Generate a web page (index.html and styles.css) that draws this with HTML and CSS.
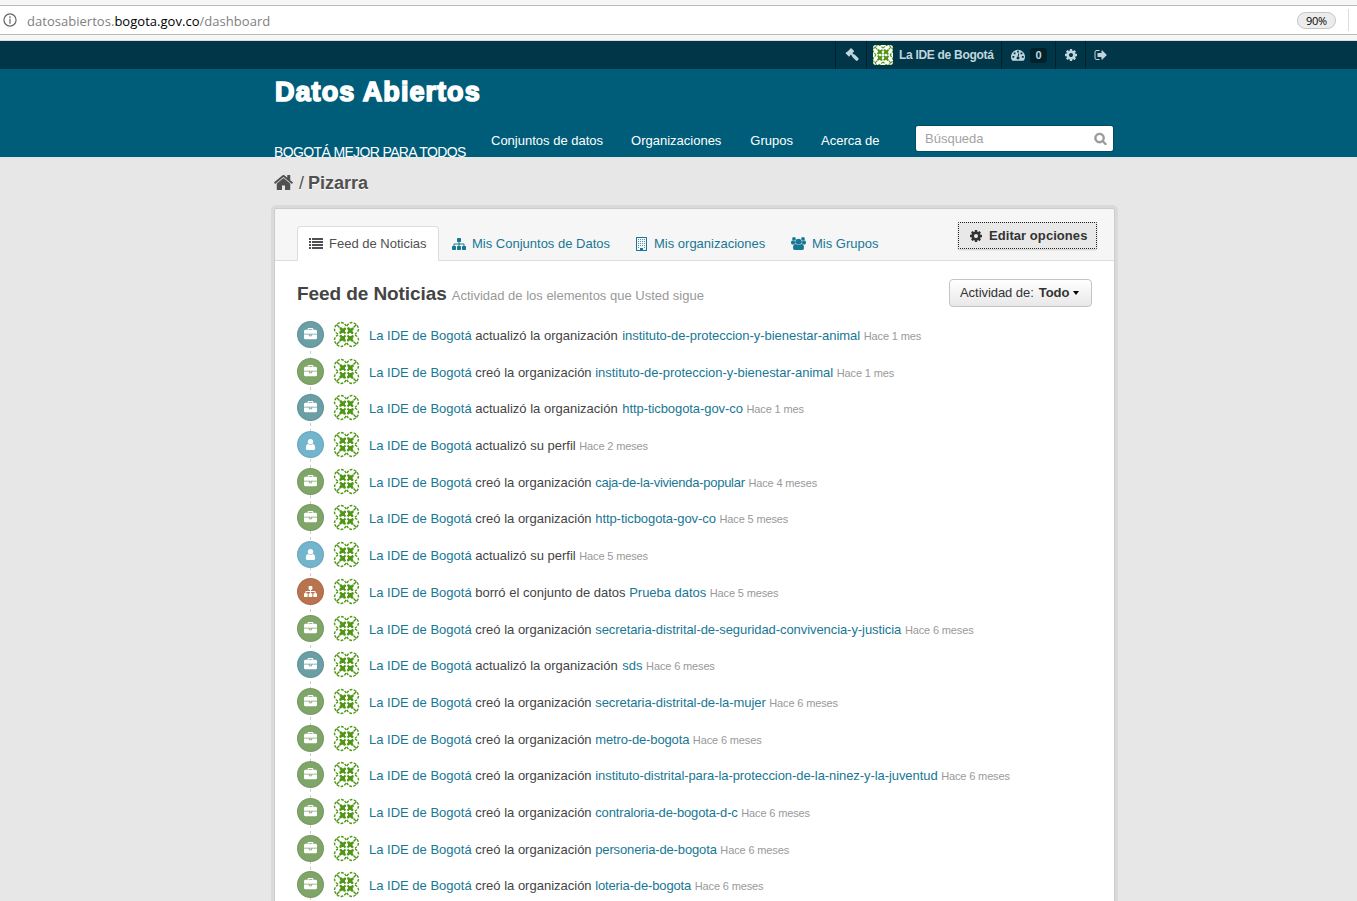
FILE: index.html
```html
<!DOCTYPE html>
<html lang="es">
<head>
<meta charset="utf-8">
<title>Pizarra - Datos Abiertos</title>
<link rel="stylesheet" href="styles.css">
</head>
<body>
<svg class="defs" width="0" height="0">
<symbol id="home" viewBox="0 0 1792 1792"><path d="M1472 992v480q0 26-19 45t-45 19h-384v-384h-256v384h-384q-26 0-45-19t-19-45v-480q0-1 .5-3t.5-3l575-474 575 474q1 2 1 6zm223-69l-62 74q-8 9-21 11h-3q-13 0-21-7l-692-577-692 577q-12 8-24 7-13-2-21-11l-62-74q-8-10-7-23.5t11-21.5l719-599q32-26 76-26t76 26l244 204v-195q0-14 9-23t23-9h192q14 0 23 9t9 23v408l219 182q10 8 11 21.5t-7 23.5z"/></symbol>
<symbol id="search" viewBox="0 0 1792 1792"><path d="M1216 832q0-185-131.5-316.5t-316.5-131.5-316.5 131.5-131.5 316.5 131.5 316.5 316.5 131.5 316.5-131.5 131.5-316.5zm512 832q0 52-38 90t-90 38q-54 0-90-38l-343-342q-179 124-399 124-143 0-273.5-55.5t-225-150-150-225-55.5-273.5 55.5-273.5 150-225 225-150 273.5-55.5 273.5 55.5 225 150 150 225 55.5 273.5q0 220-124 399l343 343q37 37 37 90z"/></symbol>
<symbol id="cog" viewBox="0 0 1792 1792"><path d="M1152 896q0-106-75-181t-181-75-181 75-75 181 75 181 181 75 181-75 75-181zm512-109v222q0 12-8 23t-20 13l-185 28q-19 54-39 91 35 50 107 138 10 12 10 25t-9 23q-27 37-99 108t-94 71q-12 0-26-9l-138-108q-44 23-91 38-16 136-29 186-7 28-36 28h-222q-14 0-24.5-8.5t-11.5-21.5l-28-184q-49-16-90-37l-141 107q-10 9-25 9-14 0-25-11-126-114-165-168-7-10-7-23 0-12 8-23 15-21 51-66.5t54-70.5q-27-50-41-99l-183-27q-13-2-21-12.5t-8-23.5v-222q0-12 8-23t19-13l186-28q14-46 39-92-40-57-107-138-10-12-10-24 0-10 9-23 26-36 98.5-107.5t94.5-71.5q13 0 26 10l138 107q44-23 91-38 16-136 29-186 7-28 36-28h222q14 0 24.5 8.5t11.5 21.5l28 184q49 16 90 37l142-107q9-9 24-9 13 0 25 10 129 119 165 170 7 8 7 22 0 12-8 23-15 21-51 66.5t-54 70.5q26 50 41 98l183 28q13 2 21 12.5t8 23.5z"/></symbol>
<symbol id="org" viewBox="0 0 1792 1792"><path d="M640 256h512v-128h-512v128zm1152 640v480q0 66-47 113t-113 47h-1472q-66 0-113-47t-47-113v-480h672v160q0 26 19 45t45 19h320q26 0 45-19t19-45v-160h672zm-768 0v128h-256v-128h256zm768-480v384h-1792v-384q0-66 47-113t113-47h352v-160q0-40 28-68t68-28h576q40 0 68 28t28 68v160h352q66 0 113 47t47 113z"/></symbol>
<symbol id="user" viewBox="0 0 1792 1792"><path d="M1536 1399q0 109-62.5 187t-150.5 78h-854q-88 0-150.5-78t-62.5-187q0-85 8.5-160.5t31.5-152 58.5-131 94-89 134.5-34.5q131 128 313 128t313-128q76 0 134.5 34.5t94 89 58.5 131 31.5 152 8.5 160.5zm-256-887q0 159-112.5 271.5t-271.5 112.5-271.5-112.5-112.5-271.5 112.5-271.5 271.5-112.5 271.5 112.5 112.5 271.5z"/></symbol>
<symbol id="sitemap" viewBox="0 0 1792 1792"><path d="M1792 1248v320q0 40-28 68t-68 28h-320q-40 0-68-28t-28-68v-320q0-40 28-68t68-28h96v-192h-512v192h96q40 0 68 28t28 68v320q0 40-28 68t-68 28h-320q-40 0-68-28t-28-68v-320q0-40 28-68t68-28h96v-192h-512v192h96q40 0 68 28t28 68v320q0 40-28 68t-68 28h-320q-40 0-68-28t-28-68v-320q0-40 28-68t68-28h96v-192q0-52 38-90t90-38h512v-192h-96q-40 0-68-28t-28-68v-320q0-40 28-68t68-28h320q40 0 68 28t28 68v320q0 40-28 68t-68 28h-96v192h512q52 0 90 38t38 90v192h96q40 0 68 28t28 68z"/></symbol>
<symbol id="signout" viewBox="0 0 1792 1792"><path d="M704 1440q0 4 1 20t.5 26.5-3 23.5-10 19.5-20.5 6.5h-320q-119 0-203.5-84.5t-84.5-203.5v-704q0-119 84.5-203.5t203.5-84.5h320q13 0 22.5 9.5t9.500 22.500q0 4 1 20t.5 26.5-3 23.5-10 19.5-20.5 6.5h-320q-66 0-113 47t-47 113v704q0 66 47 113t113 47h312l11.5 1 11.5 3 8 5.5 7 9 2 13.5zm928-544q0 26-19 45l-544 544q-19 19-45 19t-45-19-19-45v-288h-448q-26 0-45-19t-19-45v-384q0-26 19-45t45-19h448v-288q0-26 19-45t45-19 45 19l544 544q19 19 19 45z"/></symbol>
<symbol id="gavel" viewBox="0 0 14 14"><path d="M5.700.4Q6.200.2 6.600.6L8.800 2.800Q9.200 3.300 8.800 3.800L8.300 4.400 7.900 4.400 7.300 5 8.700 6.400Q9.300 6.200 9.900 6.700L13.400 10.200Q14 11 13.300 11.800L12.500 12.600Q11.700 13.200 10.900 12.600L7.400 9.100Q6.900 8.500 7.100 7.900L5.700 6.600 5.100 7.200 5.100 7.700 4.400 8.400Q3.900 8.700 3.500 8.300L.8 5.600Q.4 5.200.8 4.700L1.500 4.100 2 4.100 4.900 1.200 4.900.8z"/></symbol>
<symbol id="gauge" viewBox="0 0 14 12"><path d="M1 11.3A7 6.9 0 1 1 13 11.3Q12.7 11.7 12.2 11.7H1.8Q1.3 11.7 1 11.3z"/><path class="cut" d="M1.4 7.1h1.9v1.7H1.4zM2.7 3.4h1.8v1.8H2.7zM6.1 1.8h1.8v1.8H6.1zM9.6 3.4h1.8v1.8H9.6zM10.8 7.1h1.9v1.7h-1.9zM7.3 4.5h1L7.6 7.7Q9 8.4 8.4 9.8 7 11.2 5.6 9.8 5.2 8.3 6.6 7.7z"/></symbol>
<symbol id="list" viewBox="0 0 14 11"><path d="M0 0h2v2H0zM3 0h11v2H3zM0 3h2v2H0zM3 3h11v2H3zM0 6h2v2H0zM3 6h11v2H3zM0 9h2v2H0zM3 9h11v2H3z"/></symbol>
<symbol id="building" viewBox="0 0 11 14"><path fill-rule="evenodd" d="M.4 0h10.2q.4 0 .4.4v13.2q0 .4-.4.4H.4Q0 14 0 13.600V.4Q0 0 .4 0zM1 1v12h3v-2h3v2h3V1z"/><path opacity=".75" d="M2 2h1v1H2zM4 2h1v1H4zM6 2h1v1H6zM8 2h1v1H8zM2 4h1v1H2zM4 4h1v1H4zM6 4h1v1H6zM8 4h1v1H8zM2 6h1v1H2zM4 6h1v1H4zM6 6h1v1H6zM8 6h1v1H8zM2 8h1v1H2zM4 8h1v1H4zM6 8h1v1H6zM8 8h1v1H8zM2 10h1v1H2zM8 10h1v1H8z"/></symbol>
<symbol id="users" viewBox="0 0 15 13"><circle cx="3" cy="1.900" r="1.900"/><circle cx="12" cy="1.900" r="1.900"/><path d="M0 5.800Q0 3.500 1.300 3.500 3 4.600 4.700 3.900V6.500Q3.500 6.600 2.700 7.500H1.300Q0 7.300 0 5.800zM15 5.800Q15 3.500 13.700 3.500 12 4.600 10.300 3.900V6.500Q11.500 6.600 12.300 7.500h1.400Q15 7.300 15 5.800z"/><circle cx="7.500" cy="4.600" r="2.900"/><path d="M2 11Q2 7 4.500 7q3 1.300 6 0Q13 7 13 11q0 2-1.800 2H3.800Q2 13 2 11z"/></symbol>
<symbol id="avatar" viewBox="0 0 27 27">
<g id="quarter"><path d="M7 7l5.500 5.500M12.500 7L7 12.500" stroke="#4f9614" stroke-width="2"/><circle cx="9.700" cy="9.700" r="2.400" fill="#4f9614"/><path d="M6.500 6.500h2.500v2.500zM12.800 6.500v2.500h-2.500zM6.500 12.800v-2.500h2.500z" fill="#4f9614"/><path d="M5 13.200Q-1.200 9 3.600 3.600Q9-1.200 13.200 5" fill="none" stroke="#4f9614" stroke-width="1.400" stroke-dasharray="2.800 1.300"/><path d="M3.500 3.500l3 3" stroke="#4f9614" stroke-width="1.400"/></g>
<use href="#quarter" transform="rotate(90 13.500 13.500)"/><use href="#quarter" transform="rotate(180 13.500 13.500)"/><use href="#quarter" transform="rotate(270 13.500 13.500)"/></symbol>
</svg>

<div class="browser"><div class="address">
<svg class="info" viewBox="0 0 15 15"><circle cx="7.500" cy="7.500" r="6.500"/><path d="M7.500 6.500v5M7.500 3.500v2"/></svg>
<span class="url">datosabiertos.<b>bogota.gov.co</b>/dashboard</span><span class="zoom">90%</span><i class="sep"></i></div></div>

<div class="account"><div class="wrap account-nav">
<a class="a-gavel"><svg><use href="#gavel"/></svg></a>
<a class="a-user"><svg viewBox="0 0 20 20"><use href="#avatar" x="-1" y="-1" width="22" height="22"/></svg><span>La IDE de Bogotá</span></a>
<a class="a-dash"><svg><use href="#gauge"/></svg><span class="badge">0</span></a>
<a class="a-cog"><svg><use href="#cog"/></svg></a>
<a class="a-out"><svg><use href="#signout"/></svg></a>
</div></div>

<header class="masthead"><div class="wrap head">
<div class="brand"><h1>Datos Abiertos</h1><p>BOGOTÁ MEJOR PARA TODOS</p></div>
<nav><a>Conjuntos de datos</a><a>Organizaciones</a><a>Grupos</a><a>Acerca de</a></nav>
<div class="search"><span>Búsqueda</span><svg><use href="#search"/></svg></div>
</div></header>

<main class="wrap">
<div class="crumb"><svg><use href="#home"/></svg><span class="slash">/</span><b>Pizarra</b></div>
<section class="panel">
<div class="tabs">
<a class="tab active"><svg class="i-list"><use href="#list"/></svg>Feed de Noticias</a>
<a class="tab t2"><svg class="i-site"><use href="#sitemap"/></svg>Mis Conjuntos de Datos</a>
<a class="tab t3"><svg class="i-build"><use href="#building"/></svg>Mis organizaciones</a>
<a class="tab t4"><svg class="i-users"><use href="#users"/></svg>Mis Grupos</a>
<a class="edit"><svg><use href="#cog"/></svg>Editar opciones</a>
</div>
<div class="title"><h2>Feed de Noticias</h2><small>Actividad de los elementos que Usted sigue</small><a class="filter">Actividad de: <b>Todo</b><i></i></a></div>
<ul class="feed">
<li><span class="dot teal"><svg><use href="#org"/></svg></span><svg class="av"><use href="#avatar"/></svg><p><a>La IDE de Bogotá</a> actualizó la organización <a class="k1 n">instituto-de-proteccion-y-bienestar-animal</a> <small>Hace 1 mes</small></p></li>
<li><span class="dot green"><svg><use href="#org"/></svg></span><svg class="av"><use href="#avatar"/></svg><p><a>La IDE de Bogotá</a> creó la organización <a class="k1">instituto-de-proteccion-y-bienestar-animal</a> <small>Hace 1 mes</small></p></li>
<li><span class="dot teal"><svg><use href="#org"/></svg></span><svg class="av"><use href="#avatar"/></svg><p><a>La IDE de Bogotá</a> actualizó la organización <a class="k2 n">http-ticbogota-gov-co</a> <small>Hace 1 mes</small></p></li>
<li><span class="dot blue"><svg><use href="#user"/></svg></span><svg class="av"><use href="#avatar"/></svg><p><a>La IDE de Bogotá</a> actualizó su perfil <small>Hace 2 meses</small></p></li>
<li><span class="dot green"><svg><use href="#org"/></svg></span><svg class="av"><use href="#avatar"/></svg><p><a>La IDE de Bogotá</a> creó la organización <a class="k4">caja-de-la-vivienda-popular</a> <small>Hace 4 meses</small></p></li>
<li><span class="dot green"><svg><use href="#org"/></svg></span><svg class="av"><use href="#avatar"/></svg><p><a>La IDE de Bogotá</a> creó la organización <a class="k2">http-ticbogota-gov-co</a> <small>Hace 5 meses</small></p></li>
<li><span class="dot blue"><svg><use href="#user"/></svg></span><svg class="av"><use href="#avatar"/></svg><p><a>La IDE de Bogotá</a> actualizó su perfil <small>Hace 5 meses</small></p></li>
<li><span class="dot rust"><svg><use href="#sitemap"/></svg></span><svg class="av"><use href="#avatar"/></svg><p><a>La IDE de Bogotá</a> borró el conjunto de datos <a class="k1">Prueba datos</a> <small>Hace 5 meses</small></p></li>
<li><span class="dot green"><svg><use href="#org"/></svg></span><svg class="av"><use href="#avatar"/></svg><p><a>La IDE de Bogotá</a> creó la organización <a class="k2">secretaria-distrital-de-seguridad-convivencia-y-justicia</a> <small>Hace 6 meses</small></p></li>
<li><span class="dot teal"><svg><use href="#org"/></svg></span><svg class="av"><use href="#avatar"/></svg><p><a>La IDE de Bogotá</a> actualizó la organización <a class="n">sds</a> <small>Hace 6 meses</small></p></li>
<li><span class="dot green"><svg><use href="#org"/></svg></span><svg class="av"><use href="#avatar"/></svg><p><a>La IDE de Bogotá</a> creó la organización <a class="k2">secretaria-distrital-de-la-mujer</a> <small>Hace 6 meses</small></p></li>
<li><span class="dot green"><svg><use href="#org"/></svg></span><svg class="av"><use href="#avatar"/></svg><p><a>La IDE de Bogotá</a> creó la organización <a class="k3">metro-de-bogota</a> <small>Hace 6 meses</small></p></li>
<li><span class="dot green"><svg><use href="#org"/></svg></span><svg class="av"><use href="#avatar"/></svg><p><a>La IDE de Bogotá</a> creó la organización <a class="k2">instituto-distrital-para-la-proteccion-de-la-ninez-y-la-juventud</a> <small>Hace 6 meses</small></p></li>
<li><span class="dot green"><svg><use href="#org"/></svg></span><svg class="av"><use href="#avatar"/></svg><p><a>La IDE de Bogotá</a> creó la organización <a class="k3">contraloria-de-bogota-d-c</a> <small>Hace 6 meses</small></p></li>
<li><span class="dot green"><svg><use href="#org"/></svg></span><svg class="av"><use href="#avatar"/></svg><p><a>La IDE de Bogotá</a> creó la organización <a class="k3">personeria-de-bogota</a> <small>Hace 6 meses</small></p></li>
<li><span class="dot green"><svg><use href="#org"/></svg></span><svg class="av"><use href="#avatar"/></svg><p><a>La IDE de Bogotá</a> creó la organización <a class="k3">loteria-de-bogota</a> <small>Hace 6 meses</small></p></li>
</ul>
</section>
</main>
</body>
</html>
```
FILE: styles.css
```css
* { box-sizing: border-box; }
html, body { margin: 0; height: 901px; overflow: hidden; }
body { background: #e7e7e7; color: #444; font: 13px/18px "Liberation Sans", Arial, sans-serif; display: flex; flex-direction: column; white-space: nowrap; }
.defs { position: absolute; }
svg { display: block; fill: currentColor; flex: none; }
h1, h2, p, ul { margin: 0; padding: 0; }
.wrap { width: 839px; margin-left: 275px; }

.browser { height: 41px; flex: none; background: #f6f6f6; padding-top: 5px; border-bottom: 1px solid #ddd; }
.address { height: 30px; border-top: 1px solid #b9b9b9; border-bottom: 1px solid #b9b9b9; background: #fff; display: flex; align-items: center; padding-left: 3px; }
.info { width: 14px; height: 14px; fill: none; stroke: #666; stroke-width: 1.3; margin: -1px 10px 0 0; }
.url { font: 13px/18px "Open Sans", "Noto Sans", sans-serif; color: #808080; letter-spacing: .03px; padding-top: 1px; }
.url b { font-weight: 400; color: #000; }
.zoom { margin-left: auto; width: 39px; height: 17px; border: 1px solid #c4c4c4; border-radius: 9px; background: #ececec; color: #000; font: 11px/15px "Open Sans", sans-serif; text-align: center; letter-spacing: -.3px; }
.sep { width: 1px; height: 22px; background: #ddd; margin: 0 8px 0 12px; }

.account { height: 28px; flex: none; background: #003647; color: #c0d6de; }
.account-nav { height: 28px; display: flex; justify-content: flex-end; font-weight: 700; font-size: 12px; }
.account-nav a { display: flex; align-items: center; border-left: 1px solid #00222d; height: 28px; padding-left: 8px; }
.a-gavel { width: 31px; }
.a-gavel svg { width: 14px; height: 14px; margin-left: 1px; }
.a-user { width: 135px; }
.account-nav .a-user { padding-left: 6px; letter-spacing: -.3px; }
.a-user svg { width: 20px; height: 20px; background: #fff; border-radius: 3px; margin-right: 6px; }
.a-dash { width: 54px; }
.a-dash svg { width: 14px; height: 12px; margin: 0 5px 0 1px; }
.cut { fill: #003647; }
.badge { width: 17px; height: 15px; border-radius: 3px; background: #00222d; font-size: 11px; line-height: 15px; text-align: center; }
.a-cog { width: 30px; }
.a-cog svg { width: 14px; height: 14px; }
.a-out { width: 29px; }
.a-out svg { width: 14px; height: 14px; margin-top: -1px; }

.masthead { height: 88px; flex: none; background: #005d7a; color: #fff; overflow: hidden; }
.head { display: flex; height: 88px; }
.brand { width: 217px; margin-left: -1px; }
h1 { font-size: 27px; line-height: 32px; padding: 7px 0 0 1px; letter-spacing: 1.05px; -webkit-text-stroke: 1.6px #fff; }
.brand p { font-size: 14px; line-height: 18px; margin-top: 35px; letter-spacing: -.63px; }
nav { display: flex; gap: 28px; padding-top: 63px; width: 425px; }
nav a:nth-child(3) { margin-left: 1px; }
.search { width: 197px; height: 25px; margin-top: 57px; background: #fff; border-radius: 2px; box-shadow: 0 0 0 1px #004d66; color: #a3a3a3; display: flex; align-items: center; justify-content: space-between; padding: 0 6px 0 9px; }
.search svg { width: 13px; height: 13px; color: #999; stroke: #999; stroke-width: 60; }

.crumb { height: 52px; display: flex; align-items: center; font-size: 18px; color: #505050; margin-left: -2px; text-shadow: 0 1px #fff; }
.crumb svg { width: 21px; height: 21px; margin: -1px 5px 0 0; }
.slash { margin-right: 4px; }
.panel { background: #fff; height: 720px; border-radius: 2px; box-shadow: 0 0 0 1px #ccc, 0 0 0 4px #dadada; }
.tabs { height: 52px; background: #f6f6f6; border-bottom: 1px solid #ddd; padding: 17px 17px 0 22px; display: flex; color: #187794; border-radius: 2px 2px 0 0; }
.tab { display: flex; align-items: center; height: 35px; }
.active { width: 142px; background: #fff; color: #505050; border: 1px solid #ddd; border-bottom: 0; border-radius: 4px 4px 0 0; padding-left: 11px; }
.i-list { width: 14px; height: 11px; margin: -1px 6px 0 0; }
.t2 { width: 184px; padding-left: 13px; }
.i-site { width: 14px; height: 14px; margin-right: 6px; }
.t3 { width: 155px; padding-left: 13px; }
.i-build { width: 11px; height: 14px; margin-right: 7px; }
.t4 { padding-left: 13px; }
.i-users { width: 15px; height: 13px; margin-right: 6px; }
.edit { margin: -4px 0 0 auto; width: 139px; height: 27px; border: 1px dotted #222; background: #e8e8e8; color: #333; font-weight: 700; display: flex; align-items: center; padding-left: 10px; border-radius: 1px; box-shadow: 0 1px 2px #ccc; letter-spacing: .06px; }
.edit svg { width: 14px; height: 14px; margin-right: 6px; }
.title { height: 56px; display: flex; padding: 18px 22px 0; }
h2 { font-size: 19px; line-height: 29px; letter-spacing: -.08px; }
.title small { font-size: 13px; line-height: 34px; color: #999; margin-left: 5px; }
.filter { margin-left: auto; width: 143px; height: 28px; border: 1px solid #c4c4c4; border-radius: 4px; background: linear-gradient(#fff, #e8e8e8); color: #333; line-height: 26px; padding-left: 10px; display: flex; letter-spacing: -.05px; }
.filter b { margin-left: 5px; }
.filter i { border: 3.5px solid transparent; border-top: 4px solid #000; height: 4px; margin: 11px 0 0 4px; }
.feed { list-style: none; margin-left: 22px; background: repeating-linear-gradient(#ccc 0 3px, transparent 3px 6px) 13px 10px / 1px 600px no-repeat; }
.feed li { height: 36.7px; display: flex; padding-top: 4px; }
.dot { width: 27px; height: 27px; border-radius: 50%; color: #fff; display: flex; align-items: center; justify-content: center; margin-right: 9px; box-shadow: inset 0 0 1px 1px rgba(0,0,0,.08); }
.dot svg { width: 13px; height: 13px; }
.teal { background: #699fa5; }
.green { background: #7fa668; }
.blue { background: #73b5cd; }
.rust { background: #b9734f; }
.av { width: 27px; height: 27px; margin-right: 9px; }
.feed p { line-height: 29.4px; }
.feed a { color: #187794; }
.feed .n { margin-left: 1px; }
.k1 { letter-spacing: -.03px; }
.k2 { letter-spacing: -.07px; }
.k3 { letter-spacing: -.14px; }
.k4 { letter-spacing: -.27px; }
.feed small { font-size: 11px; color: #999; letter-spacing: -.14px; }
```
